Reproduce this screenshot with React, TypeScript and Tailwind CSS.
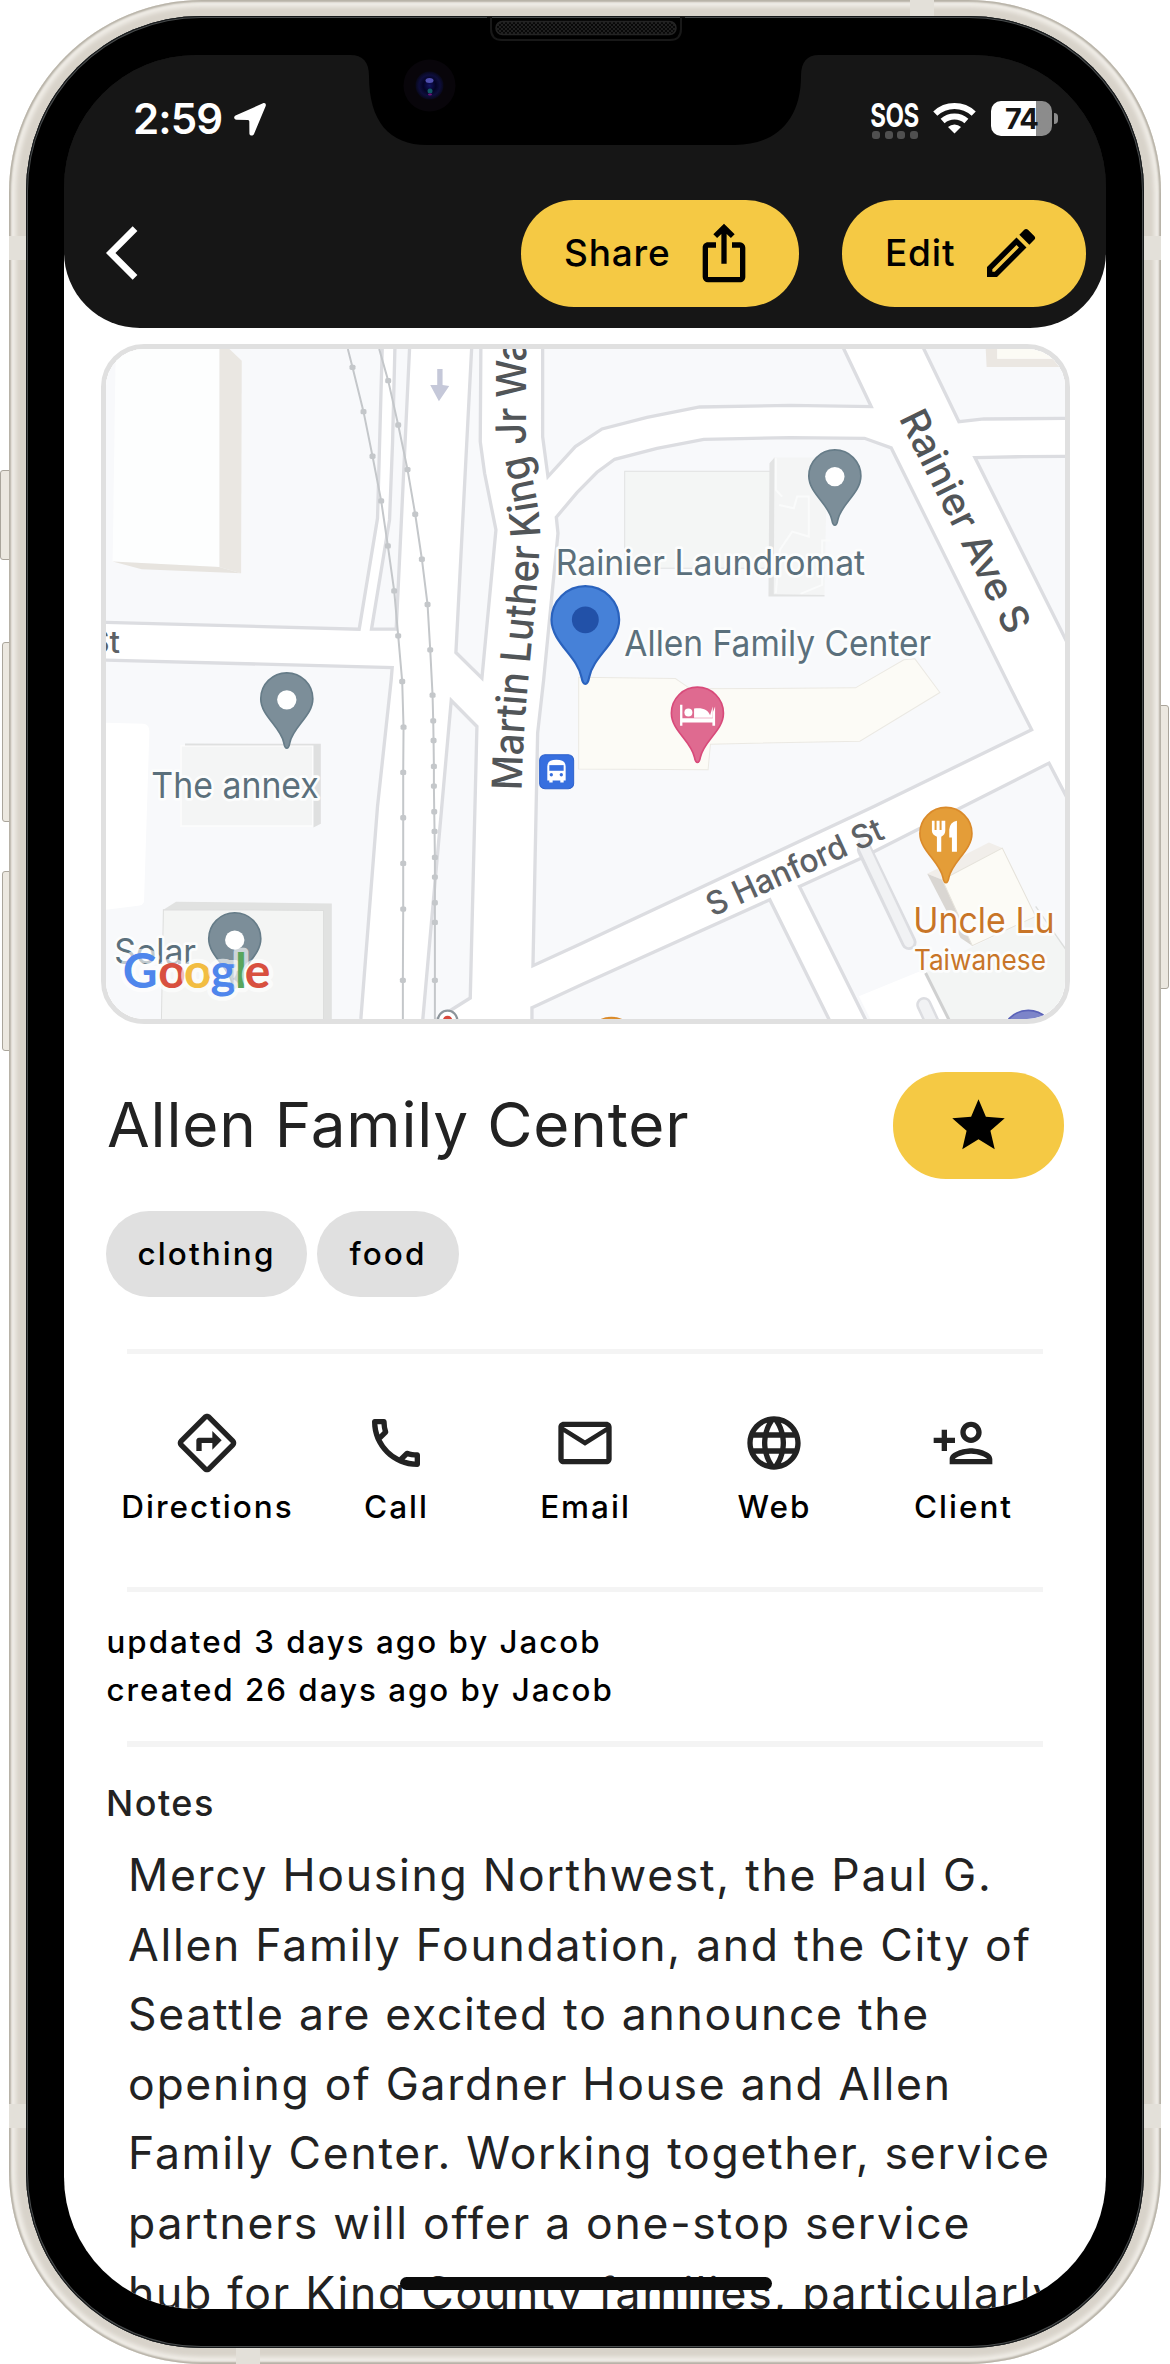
import type { ReactNode } from "react";
import {
  MdArrowBackIosNew,
  MdIosShare,
  MdLanguage,
  MdMailOutline,
  MdOutlineCall,
  MdOutlineDirections,
  MdOutlineEdit,
  MdOutlinePersonAdd,
  MdStar,
} from "react-icons/md";

type PinProps = { x: number; y: number; fill: string; stroke: string; scale?: number; children?: ReactNode };

function Pin({ x, y, fill, stroke, scale = 1, children }: PinProps) {
  return (
    <g transform={`translate(${x} ${y}) scale(${scale})`}>
      <path
        d="M0 148C-5 148-7 143-9 132C-18 84-78 52-78 0A78 78 0 0 1 78 0C78 52 18 84 9 132C7 143 5 148 0 148Z"
        fill={fill}
        stroke={stroke}
        strokeWidth="5"
      />
      {children}
    </g>
  );
}

type LabelProps = { x: number; y: number; size: number; width: number; fill?: string; children: string };

function Label({ x, y, size, width, fill = "#5b707c", children }: LabelProps) {
  return (
    <text
      x={x}
      y={y}
      fontSize={size}
      textLength={width}
      lengthAdjust="spacingAndGlyphs"
      fill={fill}
      stroke="#fcfdfd"
      strokeWidth="16"
      strokeLinejoin="round"
      paintOrder="stroke"
    >
      {children}
    </text>
  );
}

const railWest = [
  [773, 57], [787, 112], [820, 245], [847, 379], [873, 513], [893, 648], [912, 783], [924, 918], [936, 1055],
  [940, 1192], [939, 1328], [939, 1464], [939, 1601], [939, 1738], [938, 1952], [938, 2080],
];
const railEast = [
  [867, 57], [894, 152], [924, 285], [952, 419], [975, 553], [995, 688], [1012, 824], [1020, 960], [1027, 1096],
  [1029, 1173], [1030, 1232], [1031, 1310], [1031, 1369], [1032, 1446], [1033, 1505], [1034, 1583], [1034, 1642],
  [1034, 1719], [1034, 1778], [1034, 1952], [1034, 2080],
];

function Rail({ points }: { points: number[][] }) {
  return (
    <g fill="#c4c7ca">
      <polyline points={points.join(" ")} fill="none" stroke="#c4c7ca" strokeWidth="6" />
      {points.slice(1, -1).map(([x, y]) => (
        <rect key={y} x={x - 9} y={y - 8} width="18" height="16" rx="5" />
      ))}
    </g>
  );
}

function StreetMap() {
  return (
    <svg viewBox="48 57 2875 2011" preserveAspectRatio="none" className="block h-full w-full" fontFamily="Inter, sans-serif">
      <rect width="3000" height="2200" fill="#fff" />
      {/* city blocks, leaving the streets white */}
      <g fill="#f8f9fb" stroke="#dcdde1" strokeWidth="10">
        <polygon points="20,20 877,20 862,565 807,898 20,877" />
        <polygon points="915,20 907,340 898,570 844,898 918,898 958,57 960,20" />
        <polygon points="1146,20 1097,968 1175,1045 1217,600 1183,430 1170,335 1172,20" />
        <polygon points="1357,20 1357,320 1373,440 1455,350 1535,297 1670,262 1828,231 2100,226 2342,230 2260,57 2240,15" />
        <polygon points="2480,15 2500,57 2605,275 2680,267 2980,265 2980,15" />
        <polygon points="2653,383 2800,380 2980,379 2980,1040 2923,925" />
        <polygon points="1398,562 1460,488 1520,427 1573,388 1700,355 1840,328 2100,323 2322,325 2402,354 2762,1080 2823,1200 2350,1430 1470,1843 1328,1908 1342,1210 1360,1050 1403,610" />
        <polygon points="20,990 906,1013 903,1050 862,1430 812,2068 808,2100 20,2100" />
        <polygon points="1083,1112 1160,1190 1140,2005 1040,2068 995,2100" />
        <polygon points="1325,2034 1470,1967 2038,1710 2215,2068 2230,2100 1325,2100" />
        <polygon points="2127,1670 2310,1586 2480,1500 2875,1300 2925,1396 2980,1500 2980,2100 2340,2100" />
      </g>
      {/* parking areas */}
      <g fill="#fff">
        <polygon points="2305,2000 2505,1918 2590,2080 2345,2080" />
        <path d="M20 1178L160 1182Q178 1184 178 1205L162 1715Q160 1725 145 1728L20 1744Z" />
      </g>
      <g fill="none" strokeLinecap="round">
        <path d="M2322 1560L2455 1838" stroke="#dcdde1" strokeWidth="46" />
        <path d="M2315 1540L2455 1838" stroke="#f1f2f4" strokeWidth="29" />
        <path d="M2500 2025L2530 2090" stroke="#dcdde1" strokeWidth="46" />
        <path d="M2500 2025L2530 2090" stroke="#f1f2f4" strokeWidth="31" />
      </g>
      {/* buildings */}
      <polygon points="77,57 388,57 388,711 68,695" fill="#fdfefe" />
      <polygon points="388,50 418,57 455,92 453,730 388,711" fill="#eae7e2" />
      <polygon points="68,695 388,711 453,730 155,718" fill="#e7e4df" />
      <rect x="1603" y="424" width="437" height="291" fill="#f4f6f5" stroke="#e0e2e2" strokeWidth="3" />
      <polygon points="2050,383 2210,383 2202,797 2050,797" fill="#f4f5f5" />
      <path d="M2056 385V480L2075 500M2066 525L2110 535L2120 500H2155V620L2105 605L2068 660L2056 790M2130 792L2195 765V632H2220" fill="none" stroke="#fafbfb" strokeWidth="6" />
      <polygon points="2037,400 2052,383 2050,793 2202,795 2202,800 2034,800" fill="#e2e3e3" />
      <polygon points="2685,50 2720,50 2720,86 2940,86 2940,111 2688,111" fill="#ebe7e2" />
      <rect x="2720" y="50" width="220" height="36" fill="#fcfbf5" />
      <polygon
        points="1465,1042 1755,1046 1800,1077 2295,1074 2440,990 2473,987 2548,1088 2308,1234 1860,1243 1853,1320 1465,1318"
        fill="#fcfbf6"
        stroke="#ebe9e3"
        strokeWidth="3"
      />
      <rect x="273" y="1248" width="395" height="241" fill="#f4f5f5" stroke="#fcfcfc" strokeWidth="5" />
      <polygon points="285,1241 692,1242 692,1482 670,1493 670,1247 285,1247" fill="#dfe0e0" />
      <polygon points="220,1740 258,1716 725,1721 725,2080 215,2080" fill="#e1e2e1" />
      <polygon points="220,1740 700,1742 700,2080 214,2080" fill="#f4f5f4" stroke="#dddedd" strokeWidth="3" />
      <polygon points="2505,1930 2615,1866 2835,1760 2923,1850 2980,1900 2980,2100 2590,2100" fill="#f3f5f4" />
      <path d="M2505 1930L2590 2100" stroke="#cfd0d0" strokeWidth="9" />
      <path d="M2835 1730L2940 1880" stroke="#dcdedd" strokeWidth="4" />
      <polygon points="2510,1632 2695,1538 2735,1555 2555,1650" fill="#f1eeea" />
      <polygon points="2510,1632 2555,1650 2645,1848 2610,1825" fill="#d9d6d2" />
      <polygon points="2555,1650 2735,1555 2835,1760 2645,1848" fill="#fcfbf6" stroke="#e5e2da" strokeWidth="3" />
      <Rail points={railWest} />
      <Rail points={railEast} />
      <path d="M1041 117H1057V165L1077 168L1046 214L1020 165H1041Z" fill="#c5c8d9" />
      {/* street names */}
      <path
        id="mlk"
        d="M1294 1382C1297 1250 1306 1130 1316 1030C1326 910 1348 720 1349 610C1349 530 1326 450 1314 390C1306 350 1306 300 1306 250V-300"
        fill="none"
      />
      <g fill="#515558" fontWeight="500">
        <text fontSize="124">
          <textPath href="#mlk" textLength="1358" lengthAdjust="spacingAndGlyphs">
            Martin Luther King Jr Wa
          </textPath>
        </text>
        <text transform="translate(2424 264) rotate(63.6)" fontSize="117" textLength="732" lengthAdjust="spacingAndGlyphs">
          Rainier Ave S
        </text>
        <text transform="translate(1866 1762) rotate(-24.5)" fontSize="98" textLength="572" lengthAdjust="spacingAndGlyphs" fill="#5d6165">
          S Hanford St
        </text>
        <text x="90" y="970" fontSize="92" textAnchor="end" fill="#5d6165">
          St
        </text>
      </g>
      {/* places */}
      <Pin x={2233} y={438} fill="#7c8e99" stroke="#667c88">
        <circle cy="2" r="29" fill="#fff" />
      </Pin>
      <Pin x={590} y={1107} fill="#7c8e99" stroke="#667c88">
        <circle cy="3" r="29" fill="#fff" />
      </Pin>
      <Pin x={434} y={1827} fill="#7c8e99" stroke="#667c88">
        <circle cy="4" r="29" fill="#fff" />
      </Pin>
      <Pin x={1821} y={1150} fill="#df6a90" stroke="#d84a7a">
        <g fill="#fff">
          <path d="M-52-25H-45V15H46V-2L53-20V38H45V28H-45V38H-52Z" />
          <circle cx="-27" cy="-2" r="12" />
          <path d="M-10 14V-14C15-18 32-10 38 6L46-20V14Z" />
        </g>
      </Pin>
      <Pin x={2566} y={1511} fill="#e49d38" stroke="#da8a2a">
        <g fill="#fff">
          <path d="M-42-38H-34V-10H-28V-38H-19V-10H-13V-38H-2V-8Q-2 4-14 10V55H-27V10Q-42 4-42-8Z" />
          <path d="M33-38V55H18V12H10V-12Q12-34 33-38Z" />
        </g>
      </Pin>
      <Pin x={1563} y={2142} fill="#e49d38" stroke="#da8a2a" />
      <Pin x={2813} y={2120} fill="#7c84c9" stroke="#5a62b8" />
      <Pin x={1485} y={870} scale={1.3} fill="#4681d8" stroke="#2a62bd">
        <circle r="31" fill="#2251a8" />
      </Pin>
      <circle cx="1072" cy="2072" r="29" fill="#fff" stroke="#8d959b" strokeWidth="7" />
      <circle cx="1072" cy="2072" r="14" fill="#d9483b" />
      <rect x="1348" y="1275" width="102" height="102" rx="16" fill="#376fdf" stroke="#2e62cc" strokeWidth="3" />
      <path d="M1371 1352V1310Q1371 1290 1398 1290Q1426 1290 1426 1310V1352H1420V1358H1410V1352H1387V1358H1377V1352Z" fill="#fff" />
      <path d="M1377 1306H1420V1323H1377Z" fill="#376fdf" />
      <circle cx="1383" cy="1335" r="5" fill="#376fdf" />
      <circle cx="1413" cy="1335" r="5" fill="#376fdf" />
      <Label x={1396} y={735} size={105} width={928}>Rainier Laundromat</Label>
      <Label x={1602} y={978} size={107} width={920}>Allen Family Center</Label>
      <Label x={184} y={1405} size={107} width={502}>The annex</Label>
      <Label x={73} y={1902} size={105} width={245}>Solar</Label>
      <Label x={2468} y={1810} size={107} width={424} fill="#c87528">Uncle Lu</Label>
      <Label x={2470} y={1921} size={84} width={396} fill="#c87528">Taiwanese</Label>
      <text
        y="1974"
        fontFamily="Lato, sans-serif"
        fontWeight="700"
        fontSize="144"
        stroke="#fff"
        strokeOpacity="0.65"
        strokeWidth="26"
        strokeLinejoin="round"
        paintOrder="stroke"
      >
        <tspan x="98" fill="#4f86ec">G</tspan>
        <tspan x="205" fill="#d8503f">o</tspan>
        <tspan x="282" fill="#f2bd42">o</tspan>
        <tspan x="361" fill="#4f86ec">g</tspan>
        <tspan x="435" fill="#58a55c">l</tspan>
        <tspan x="464" fill="#d8503f">e</tspan>
      </text>
    </svg>
  );
}

function StatusBar() {
  return (
    <div className="flex h-[130px] items-start pl-[69px] pt-[39px] text-white">
      <span className="w-[98px] text-[42px] font-semibold leading-[50px] tracking-[-0.9px]">2:59</span>
      <svg viewBox="0 0 32 33" className="mt-[9px] ml-[3px] h-[33px] w-8" fill="#fff">
        <path d="M29 .3C31-.4 32.300.8 31.700 3L20 31C19 33.200 15.500 33 15.400 30.500L15.300 18.500Q15.300 17 14 17L2.500 16.800C-.2 16.700-.6 13.500 1.500 12.500Z" />
      </svg>
      <div className="ml-[604px] mt-[4px] flex w-[50px] flex-col items-center">
        <span className="origin-center scale-x-[0.75] text-[32px] font-bold leading-[35px] tracking-[-0.5px]">SOS</span>
        <div className="-mt-[2px] flex gap-[4.5px]">
          {[0, 1, 2, 3].map((i) => (
            <i key={i} className="size-2 rounded-[3px] bg-[#505050]" />
          ))}
        </div>
      </div>
      <svg viewBox="0 0 43 32" className="ml-[13px] mt-2 h-8 w-[43px]" fill="none" stroke="#fff" strokeWidth="6">
        <path d="M2.300 11.600A28 28 0 0 1 40.700 11.600" />
        <path d="M9.600 19A18 18 0 0 1 33.400 19" />
        <path d="M21.500 31.500L15 25A9.500 9.500 0 0 1 28 25Z" fill="#fff" stroke="none" />
      </svg>
      <div className="ml-[15px] mt-[7px] flex items-center gap-[2px]">
        <div className="flex h-[35px] w-[61px] items-center justify-center rounded-[10px] bg-linear-to-r from-white from-73% to-[#8c8c8c] to-73% text-[29px] font-bold leading-none tracking-[-1px] text-[#161616]">
          74
        </div>
        <i className="h-[11px] w-1 rounded-r-full bg-[#8c8c8c]" />
      </div>
    </div>
  );
}

function Header() {
  return (
    <header className="h-[273px] rounded-b-[76px] bg-[#161616]">
      <StatusBar />
      <div className="flex items-center pl-[26px] pt-[14.5px]">
        <MdArrowBackIosNew className="size-16 text-white" />
        <button className="ml-[367px] flex h-[107px] w-[278px] items-center justify-between rounded-[53px] bg-[#f5c944] pl-[43px] pr-[43px] text-[37px] font-[450] tracking-[0.8px] text-black">
          Share
          <MdIosShare className="size-16" />
        </button>
        <button className="ml-[43px] flex h-[107px] w-[244px] items-center justify-between rounded-[53px] bg-[#f5c944] pl-[43px] pr-[43px] text-[37px] font-[450] tracking-[0.8px] text-black">
          Edit
          <MdOutlineEdit className="size-16" />
        </button>
      </div>
    </header>
  );
}

const actions = [
  { label: "Directions", Icon: MdOutlineDirections },
  { label: "Call", Icon: MdOutlineCall },
  { label: "Email", Icon: MdMailOutline },
  { label: "Web", Icon: MdLanguage },
  { label: "Client", Icon: MdOutlinePersonAdd },
];

const notes = [
  "Mercy Housing Northwest, the Paul G.",
  "Allen Family Foundation, and the City of",
  "Seattle are excited to announce the",
  "opening of Gardner House and Allen",
  "Family Center. Working together, service",
  "partners will offer a one-stop service",
  "hub for King County families, particularly",
];

const Divider = ({ className }: { className: string }) => <div className={`mx-[63px] h-[5.5px] bg-[#f4f4f4] ${className}`} />;

function Place() {
  return (
    <main className="text-black">
      <div className="ml-[36.500px] mt-4 h-[680px] w-[969px] overflow-hidden rounded-[43px] border-[5.300px] border-[#e0e0e0]">
        <StreetMap />
      </div>
      <div className="mt-12 flex h-[107px] items-center justify-between pl-[43px] pr-[42px]">
        <h1 className="-mt-[2px] text-[62px] leading-[76px] tracking-[0.800px] text-[#222]">Allen Family Center</h1>
        <button className="flex h-[107px] w-[171px] items-center justify-center rounded-[53px] bg-[#f5c944]">
          <MdStar className="size-[63px]" />
        </button>
      </div>
      <div className="ml-[42px] mt-8 flex gap-[10px] text-[31.5px] font-[450] tracking-[2.100px]">
        <span className="flex h-[86px] w-[201px] items-center justify-center rounded-[43px] bg-[#e0e0e0]">clothing</span>
        <span className="flex h-[86px] w-[142px] items-center justify-center rounded-[43px] bg-[#e0e0e0]">food</span>
      </div>
      <Divider className="mt-[51.500px]" />
      <div className="ml-[48px] mt-[57px] grid w-[945px] grid-cols-5 text-[31.5px] font-[450] leading-10 tracking-[2px]">
        {actions.map(({ label, Icon }) => (
          <div key={label} className="flex flex-col items-center gap-3">
            <Icon className="size-16 text-[#222]" />
            <span className="pl-[2px]">{label}</span>
          </div>
        ))}
      </div>
      <Divider className="mt-[59.500px]" />
      <div className="ml-[42.500px] mt-[25.500px] text-[31.300px] font-[450] leading-[48.5px] tracking-[2px]">
        <p>updated 3 days ago by Jacob</p>
        <p>created 26 days ago by Jacob</p>
      </div>
      <Divider className="mt-[26.500px]" />
      <h2 className="ml-[42px] mt-[33px] text-[36px] font-[450] leading-[46px] tracking-[1.500px] text-[#222]">Notes</h2>
      <div className="ml-[64px] mt-[15.5px] whitespace-nowrap text-[44.5px] leading-[69.6px] tracking-[1.720px] text-[#222]">
        {notes.map((line) => (
          <p key={line}>{line}</p>
        ))}
      </div>
    </main>
  );
}

/* Notch, front camera and earpiece, drawn over the top of the display. */
function Notch() {
  return (
    <svg viewBox="0 0 480 145" className="absolute left-[345px] top-0 h-[145px] w-[480px]">
      <defs>
        <pattern id="mesh" width="4" height="4" patternUnits="userSpaceOnUse">
          <rect width="4" height="4" fill="#080808" />
          <circle cx="1" cy="1" r="0.900" fill="#2b2b2b" />
          <circle cx="3" cy="3" r="0.900" fill="#2b2b2b" />
        </pattern>
        <radialGradient id="lens">
          <stop offset="0" stopColor="#121260" />
          <stop offset="0.450" stopColor="#040425" />
          <stop offset="0.750" stopColor="#0e0e3c" />
          <stop offset="1" stopColor="#08081a" />
        </radialGradient>
      </defs>
      <path d="M5 40V55C18 55 24 62 24 76C24 121 44 145 82 145H390C430 145 456 121 456 76C456 62 462 55 474 55V40Z" fill="#000" />
      <path d="M142 17H146V29Q146 40 157 40H325Q336 40 336 29V17H340" fill="none" stroke="#181818" strokeWidth="2" />
      <rect x="151" y="21.500" width="180" height="13" rx="6.500" fill="url(#mesh)" stroke="#242424" strokeWidth="1.500" />
      <circle cx="84.500" cy="85.500" r="26" fill="#08050a" />
      <circle cx="84.500" cy="85.500" r="14" fill="url(#lens)" />
      <ellipse cx="84.500" cy="80.500" rx="4" ry="2.500" fill="#5050b0" />
      <ellipse cx="85" cy="91" rx="2.500" ry="2.500" fill="#125a66" />
      <ellipse cx="85" cy="94.500" rx="2" ry="1" fill="#701478" />
    </svg>
  );
}

export default function App() {
  return (
    <div className="relative h-[2364px] w-[1170px] overflow-hidden bg-white px-[9px] font-[Inter,sans-serif]">
      {/* hardware buttons */}
      <i className="absolute left-0 top-[470px] h-[90px] w-3 rounded-l-[3px] border border-[#aaa59b] bg-[#ece8e0]" />
      <i className="absolute left-[2px] top-[642px] h-[180px] w-3 rounded-l-[3px] border border-[#aaa59b] bg-[#ece8e0]" />
      <i className="absolute left-[2px] top-[871px] h-[180px] w-3 rounded-l-[3px] border border-[#aaa59b] bg-[#ece8e0]" />
      <i className="absolute right-[1px] top-[705px] h-[284px] w-3 rounded-r-[3px] border border-[#aaa59b] bg-[#ece8e0]" />

      <div className="relative h-full overflow-hidden rounded-[193px] bg-[#d8d3ca] p-[17px] pt-4 pb-4 shadow-[inset_0_0_2px_2px_#b5b0a5,inset_0_0_4px_7px_#f0ede7]">
        {/* antenna bands */}
        <i className="absolute left-0 top-[236px] h-6 w-5 bg-[#e3e0d9]" />
        <i className="absolute right-0 top-[236px] h-6 w-5 bg-[#e3e0d9]" />
        <i className="absolute left-0 top-[2104px] h-6 w-5 bg-[#e3e0d9]" />
        <i className="absolute right-0 top-[2104px] h-6 w-5 bg-[#e3e0d9]" />
        <i className="absolute left-[901px] top-0 h-5 w-6 bg-[#e3e0d9]" />
        <i className="absolute bottom-0 left-[227px] h-5 w-6 bg-[#e3e0d9]" />
        <div className="relative h-full rounded-[175px] bg-black px-[38px] pb-[39px] pt-[39px] shadow-[inset_0_0_0_1px_#15181a,inset_0_0_0_2px_#484b4c]">
          <div className="relative h-full overflow-hidden rounded-[132px] bg-linear-to-b from-[#161616] from-[160px] to-white to-[160px]">
            <Header />
            <Place />
            <div className="absolute bottom-[19px] left-[336px] h-[13px] w-[372px] rounded-full bg-[#0b0b0b]" />
          </div>
        </div>
      </div>
      <Notch />
    </div>
  );
}
